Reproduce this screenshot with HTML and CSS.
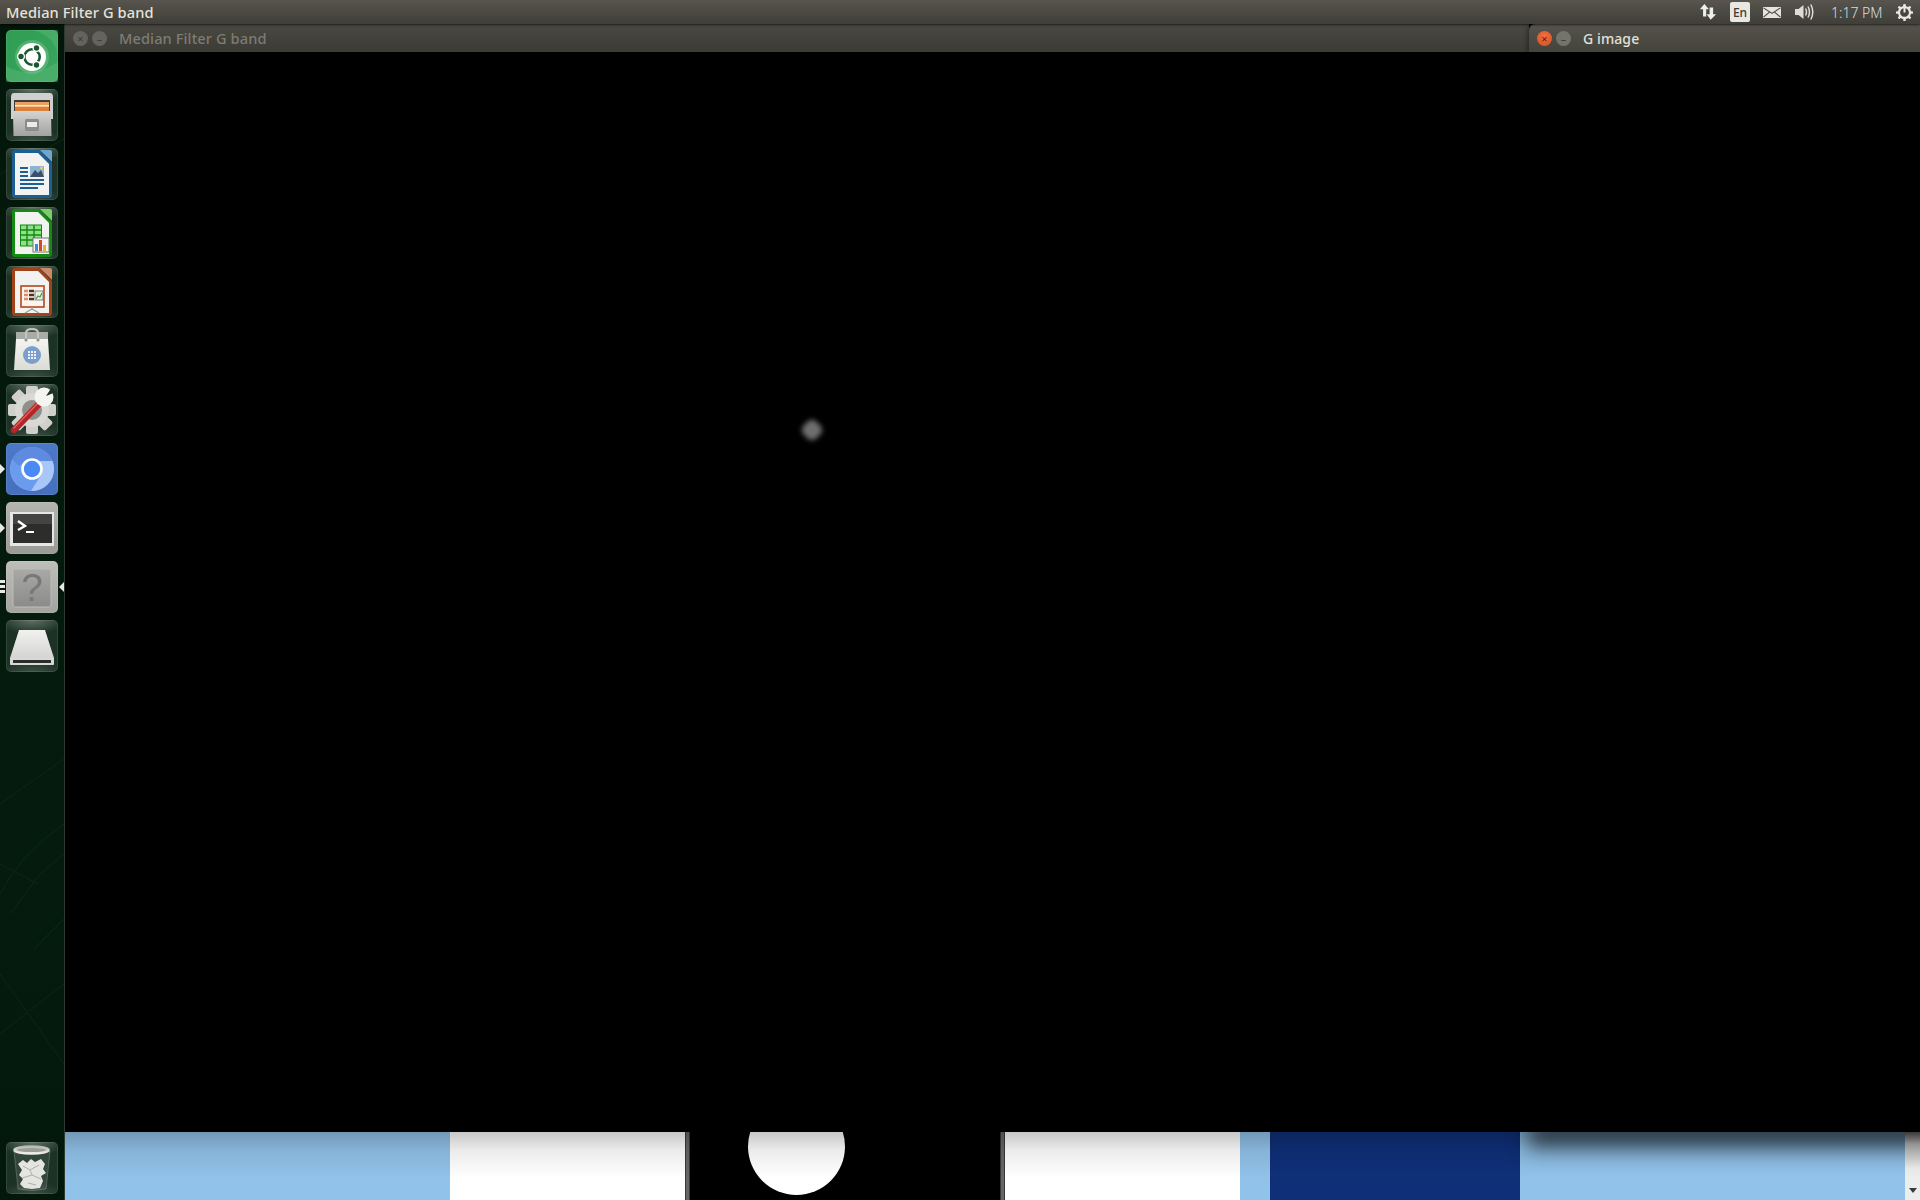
FILE: index.html
```html
<!DOCTYPE html>
<html lang="en">
<head>
<meta charset="utf-8">
<title>Median Filter G band</title>
<link rel="stylesheet" href="styles.css">
</head>
<body>
<div class="desktop">
  <header class="panel">
    <div class="panel-title">Median Filter G band</div>
    <div class="indicators">
      <svg class="ind-net" width="18" height="18" viewBox="0 0 20 20"><path d="M6 1 L11 7 H8 V15 H4.5 V7 H1 Z M13 18.5 L19 12.5 H15.7 V5 H11.8 V12.5 H8.5 Z" fill="#eeeeea"/></svg>
      <div class="ind-lang">En</div>
      <svg class="ind-mail" width="18" height="11" viewBox="0 0 18 13" preserveAspectRatio="none"><rect width="18" height="13" fill="#e4e3dd"/><path d="M0.5 1 L9 7.5 L17.5 1 M0.5 12 L6.5 6 M17.5 12 L11.5 6" fill="none" stroke="#4a4943" stroke-width="1.1"/></svg>
      <svg class="ind-vol" width="20" height="18" viewBox="0 0 20 18"><path d="M0 6 H3.5 L8.5 2 V16 L3.5 12 H0 Z" fill="#dddcd6"/><path d="M10.5 5.5 Q12.5 9 10.5 12.5 M13 3.5 Q16 9 13 14.5 M15.8 1.5 Q19.8 9 15.8 16.5" fill="none" stroke="#dddcd6" stroke-width="1.5"/></svg>
      <div class="ind-clock">1:17 PM</div>
      <svg class="ind-power" width="17" height="17" viewBox="0 0 20 20"><g fill="#e8e7e1"><rect x="8.5" y="0" width="3" height="20" rx="1"/><rect x="0" y="8.5" width="20" height="3" rx="1"/><rect x="8.5" y="0" width="3" height="20" rx="1" transform="rotate(45 10 10)"/><rect x="8.5" y="0" width="3" height="20" rx="1" transform="rotate(-45 10 10)"/></g><circle cx="10" cy="10" r="6.4" fill="none" stroke="#e8e7e1" stroke-width="2.6"/><circle cx="10" cy="10" r="5.1" fill="#45443e"/><rect x="8.8" y="1" width="2.4" height="9" fill="#e8e7e1"/></svg>
    </div>
  </header>

  <div class="main">
    <nav class="launcher">
      <svg class="wallpaper" width="64" height="1176" viewBox="0 0 64 1176" fill="none" stroke="#0a2a14" stroke-width="1">
        <path d="M0 150 L64 115 M0 780 L64 735 M0 870 Q20 830 64 800 M0 950 L64 1040 M34 925 L64 895 M0 1010 L64 960 M10 890 L40 850 L64 830 M0 840 L38 860"/>
      </svg>
      <div class="launcher-top">
        <div class="tile tile-dash">
          <svg width="52" height="52" viewBox="0 0 52 52">
            <path d="M0 36 Q24 50 52 32 V52 H0 Z M28 0 Q52 8 52 30 V0 Z" fill="#62bb7e" opacity=".4"/>
            <circle cx="26" cy="27" r="17" fill="#8fd0a4" opacity=".35"/>
            <circle cx="26" cy="27" r="14" fill="#fff"/>
            <circle cx="26" cy="27" r="7.7" fill="none" stroke="#17582f" stroke-width="2.6"/>
            <circle cx="30.5" cy="18" r="4" fill="#fff"/><circle cx="30.5" cy="35" r="4" fill="#fff"/><circle cx="15" cy="26.5" r="4" fill="#fff"/>
            <circle cx="30.5" cy="18" r="2.7" fill="#17582f"/><circle cx="30.5" cy="35" r="2.7" fill="#17582f"/><circle cx="15" cy="26.5" r="2.7" fill="#17582f"/>
          </svg>
        </div>
        <div class="tile">
          <svg width="52" height="52" viewBox="0 0 52 52">
            <defs><linearGradient id="drawer" x1="0" y1="0" x2="0" y2="1"><stop offset="0" stop-color="#d4d4d2"/><stop offset="1" stop-color="#a2a2a0"/></linearGradient></defs>
            <path d="M5 8 Q5 4 8 4 H44 Q47 4 47 8 V30 H5 Z" fill="#cfcfcd"/>
            <rect x="8" y="11" width="36" height="12" fill="#3d3d3b"/>
            <rect x="9" y="13" width="34" height="10" fill="#e8a05c"/>
            <rect x="9" y="16" width="34" height="1.5" fill="#fbe6c6"/>
            <rect x="9" y="18" width="34" height="5" fill="#dc7f3c"/>
            <path d="M7 22 H45 L45.5 47 H7.5 Z" fill="url(#drawer)"/>
            <rect x="19" y="30" width="14" height="12" rx="1.5" fill="#8c8c8a"/>
            <rect x="21" y="33" width="10" height="5" fill="#ececea"/>
          </svg>
        </div>
        <div class="tile">
          <svg width="52" height="52" viewBox="0 0 52 52">
            <path d="M6 5 Q6 2 9 2 H33 L46 15 V47 Q46 50 43 50 H9 Q6 50 6 47 Z" fill="#1d5f92"/>
            <path d="M34 2 H44 Q46 2 46 4 V14 Z" fill="#6fa6cf"/>
            <path d="M9 5 H32 L43 16 V47 H9 Z" fill="#f2f2f0"/>
            <path d="M14 20 H22 M14 24 H22 M14 28 H22 M14 32 H38 M14 36 H38 M14 40 H32" stroke="#1d5f92" stroke-width="2"/>
            <rect x="24" y="18" width="14" height="11" fill="#8db3d3"/>
            <path d="M24 29 L29 22 L32 25 L35 22 L38 29 Z" fill="#39506a"/>
            <circle cx="35.5" cy="20" r="1.5" fill="#e8cf5b"/>
          </svg>
        </div>
        <div class="tile">
          <svg width="52" height="52" viewBox="0 0 52 52">
            <path d="M6 5 Q6 2 9 2 H33 L46 15 V47 Q46 50 43 50 H9 Q6 50 6 47 Z" fill="#138a10"/>
            <path d="M34 2 H44 Q46 2 46 4 V14 Z" fill="#77cf6a"/>
            <path d="M9 5 H32 L43 16 V47 H9 Z" fill="#f2f2f0"/>
            <rect x="14.5" y="18" width="21" height="21" fill="#8fe08a" stroke="#138a10"/>
            <path d="M14 23 H36 M14 28 H36 M14 33 H36 M21 18 V39 M28 18 V39" stroke="#138a10" stroke-width="1.4"/>
            <rect x="27" y="31" width="16" height="14" fill="#f4f4f2" stroke="#777"/>
            <rect x="29" y="37" width="3" height="7" fill="#3f8fd0"/><rect x="33" y="33" width="3" height="11" fill="#d8452c"/><rect x="37" y="38" width="3" height="6" fill="#eeb12c"/>
          </svg>
        </div>
        <div class="tile">
          <svg width="52" height="52" viewBox="0 0 52 52">
            <path d="M6 5 Q6 2 9 2 H33 L46 15 V47 Q46 50 43 50 H9 Q6 50 6 47 Z" fill="#a2421a"/>
            <path d="M34 2 H44 Q46 2 46 4 V14 Z" fill="#cd8a68"/>
            <path d="M9 5 H32 L43 16 V47 H9 Z" fill="#f2f2f0"/>
            <rect x="15" y="20" width="23" height="21" fill="#fbf4ef" stroke="#b5481d" stroke-width="1.6"/>
            <path d="M18 25 H22 M18 29 H22 M18 33 H22" stroke="#e08b5c" stroke-width="2.4"/>
            <path d="M23 25 H28 M23 29 H28 M23 33 H28" stroke="#55301e" stroke-width="2.4"/>
            <rect x="29" y="25" width="8" height="9" fill="#e8efe4" stroke="#666" stroke-width=".8"/>
            <path d="M30 33 L32 30 L34 31 L36 27" fill="none" stroke="#3f9c3a" stroke-width="1.2"/>
            <path d="M26 41 V44 M26 43 L19 47 M26 43 L33 47" stroke="#999" stroke-width="1.2"/>
          </svg>
        </div>
        <div class="tile">
          <svg width="52" height="52" viewBox="0 0 52 52">
            <defs><linearGradient id="bag" x1="0" y1="0" x2="0" y2="1"><stop offset="0" stop-color="#f4f4f0"/><stop offset="1" stop-color="#dcdcd6"/></linearGradient></defs>
            <path d="M10 14 L8 45 H44 L42 14 Z" fill="url(#bag)"/>
            <path d="M10 14 L10 7 H42 L42 14 Z" fill="#a7aca6"/>
            <path d="M20 15 V8 Q20 4 26 4 Q32 4 32 8 V15" fill="none" stroke="#c3c6c0" stroke-width="2"/>
            <circle cx="20" cy="15" r="1.5" fill="#88908a"/><circle cx="32" cy="15" r="1.5" fill="#88908a"/>
            <circle cx="26" cy="30" r="9" fill="#7c9ecd"/>
            <g fill="#eef2f8"><rect x="22" y="26" width="2" height="2"/><rect x="25" y="26" width="2" height="2"/><rect x="28" y="26" width="2" height="2"/><rect x="22" y="29" width="2" height="2"/><rect x="25" y="29" width="2" height="2"/><rect x="28" y="29" width="2" height="2"/><rect x="22" y="32" width="2" height="2"/><rect x="25" y="32" width="2" height="2"/><rect x="28" y="32" width="2" height="2"/></g>
          </svg>
        </div>
        <div class="tile">
          <svg width="52" height="52" viewBox="0 0 52 52">
            <g fill="#cfcfcb"><rect x="20" y="2" width="12" height="48" rx="2"/><rect x="2" y="20" width="48" height="12" rx="2"/><rect x="20" y="2" width="12" height="48" rx="2" transform="rotate(45 26 26)"/><rect x="20" y="2" width="12" height="48" rx="2" transform="rotate(-45 26 26)"/></g>
            <circle cx="26" cy="26" r="17" fill="#d8d8d4"/>
            <circle cx="26" cy="26" r="10" fill="#8f8f8b"/>
            <path d="M8 46 L34 19" stroke="#b42626" stroke-width="6.5" stroke-linecap="round"/>
            <path d="M8 44 L32 19" stroke="#e0605a" stroke-width="1.4" stroke-linecap="round"/>
            <circle cx="38" cy="13" r="9.5" fill="#f4f4f0"/>
            <path d="M40 12 L46 3 L50 8 Z" fill="#1c3225"/>
          </svg>
        </div>
        <div class="tile tile-chrome has-pip">
          <svg width="52" height="52" viewBox="0 0 52 52">
            <circle cx="26" cy="26" r="22" fill="#7aa5ec"/>
            <path d="M26 4 A22 22 0 0 1 46.5 18 H26 Q16 18 11 26 L6 16 Q14 4 26 4 Z" fill="#5e8be0"/>
            <path d="M6 16 Q2 30 10 40 Q16 46 25 48 L33 36 Q20 38 17 27 Z" fill="#6a9bee"/>
            <path d="M46.5 18 A22 22 0 0 1 25 48 L35 32 Q38 24 33 18 Z" fill="#a8c6f8"/>
            <circle cx="26" cy="26" r="9.5" fill="#4a8af4" stroke="#fff" stroke-width="2.6"/>
          </svg>
          <i class="pip"></i>
        </div>
        <div class="tile tile-term has-pip">
          <svg width="52" height="52" viewBox="0 0 52 52">
            <rect x="4" y="10" width="44" height="34" fill="#e6e6e4"/>
            <rect x="7" y="12" width="39" height="29" fill="#2d2d2b"/>
            <rect x="7" y="12" width="39" height="10" fill="#444442"/>
            <path d="M12 19 L19 24 L12 28" fill="none" stroke="#fff" stroke-width="2.4"/>
            <rect x="20" y="29" width="8" height="2" fill="#fff"/>
          </svg>
          <i class="pip"></i>
        </div>
        <div class="tile tile-help has-lines">
          <svg width="52" height="52" viewBox="0 0 52 52">
            <defs><linearGradient id="helpbox" x1="0" y1="0" x2="0" y2="1"><stop offset="0" stop-color="#a9a9a7"/><stop offset="1" stop-color="#8b8b89"/></linearGradient></defs>
            <rect x="7" y="8" width="38" height="38" rx="2" fill="url(#helpbox)" stroke="#bcbcba"/>
            <text class="help-mark" x="26" y="40" text-anchor="middle">?</text>
          </svg>
          <i class="lines"><b></b><b></b><b></b></i>
          <i class="pip-right"></i>
        </div>
        <div class="tile">
          <svg width="52" height="52" viewBox="0 0 52 52">
            <defs><linearGradient id="drive" x1="0" y1="0" x2="0" y2="1"><stop offset="0" stop-color="#f1f1ef"/><stop offset="1" stop-color="#d4d4d2"/></linearGradient></defs>
            <path d="M13 10 H39 L48 38 H4 Z" fill="url(#drive)"/>
            <path d="M4 38 H48 V44 Q48 45 47 45 H5 Q4 45 4 44 Z" fill="#d8d8d6"/>
            <rect x="7" y="40" width="38" height="3" fill="#2c2c2a"/>
          </svg>
        </div>
      </div>
      <div class="tile tile-trash">
        <svg width="52" height="52" viewBox="0 0 52 52">
          <defs><linearGradient id="rim" x1="0" y1="0" x2="0" y2="1"><stop offset="0" stop-color="#b8b8b4"/><stop offset="1" stop-color="#efefeb"/></linearGradient></defs>
          <path d="M8 9 L12 47 Q26 50 40 47 L44 9 Z" fill="#ffffff" fill-opacity=".1" stroke="#aab" stroke-opacity=".35"/>
          <g fill="#e4e4e0">
            <path d="M12 22 L17 18 L21 21 L25 17 L29 20 L35 17 L39 22 L37 27 L40 31 L35 34 L37 39 L34 46 L26 47 L18 46 L14 42 L17 37 L13 33 L16 28 Z"/>
          </g>
          <path d="M17 24 L24 28 L33 23 M16 36 L26 33 L35 37 M24 28 L26 33 M22 41 L30 43" fill="none" stroke="#a8a8a4" stroke-width=".9"/>
          <ellipse cx="25.5" cy="8" rx="17" ry="3.4" fill="#9a9e98" stroke="url(#rim)" stroke-width="2.6"/>
        </svg>
      </div>
    </nav>

    <div class="workspace">
      <div class="titlebars">
        <div class="titlebar titlebar-back">
          <span class="wbtn wbtn-dim">×</span>
          <span class="wbtn wbtn-dim">–</span>
          <span class="wtitle wtitle-dim">Median Filter G band</span>
        </div>
        <div class="titlebar titlebar-front">
          <span class="wbtn wbtn-close">×</span>
          <span class="wbtn wbtn-min">–</span>
          <span class="wtitle">G image</span>
        </div>
      </div>
      <div class="canvas">
        <div class="spot"></div>
      </div>
      <div class="strip">
        <div class="seg seg-sky seg-a"></div>
        <div class="seg seg-white seg-b"></div>
        <div class="seg seg-bar"></div>
        <div class="seg seg-black"><div class="disc"></div></div>
        <div class="seg seg-bar"></div>
        <div class="seg seg-white seg-b"></div>
        <div class="seg seg-sky seg-c"></div>
        <div class="seg seg-navy"></div>
        <div class="seg seg-sky seg-d"><div class="cast"></div></div>
        <div class="seg seg-scroll"><i class="scroll-arrow"></i></div>
        <div class="strip-shade"></div>
      </div>
    </div>
  </div>
</div>
</body>
</html>
```
FILE: styles.css
```css
* { box-sizing: border-box; }
html, body { margin: 0; padding: 0; background: #000; }
body { font-family: "Noto Sans", "Open Sans", sans-serif; }

.desktop { width: 1920px; height: 1200px; display: flex; flex-direction: column; overflow: hidden; }

.panel {
  height: 24px; flex: none; display: flex; justify-content: space-between; align-items: center;
  background: linear-gradient(#57554d, #3f3e38);
  box-shadow: 0 1px 2px rgba(0,0,0,.6); position: relative; z-index: 3;
}
.panel-title { margin-left: 6px; font-size: 14.6px; font-weight: 500; color: #e6e3da; white-space: nowrap; letter-spacing: .1px; }
.indicators { display: flex; align-items: center; }
.ind-net { margin-right: 13px; }
.ind-lang {
  width: 20px; height: 20px; border-radius: 2px; background: #e9e7e1; color: #3c3b36;
  font-size: 12px; font-weight: 500; display: flex; align-items: center; justify-content: center;
  margin-right: 13px;
}
.ind-mail { margin-right: 14px; }
.ind-vol { margin-right: 16px; }
.ind-clock { width: 51px; flex: none; font-size: 14px; font-weight: 300; color: #d8dce0; margin-right: 14px; white-space: nowrap; }
.ind-power { margin-right: 7px; }

.main { flex: 1; display: flex; min-height: 0; }

.launcher {
  width: 65px; flex: none; position: relative; padding: 6px;
  display: flex; flex-direction: column; justify-content: space-between;
  background: linear-gradient(#03160a, #041c0d 70%, #03180b); border-right: 1px solid #2c3a2f;
}
.wallpaper { position: absolute; left: 0; top: 0; }
.launcher-top { display: flex; flex-direction: column; gap: 7px; position: relative; }
.tile {
  width: 52px; height: 52px; border-radius: 5px; position: relative; flex: none;
  background:
    radial-gradient(ellipse 34px 14px at 50% 0, rgba(255,255,255,.3), rgba(255,255,255,0)),
    radial-gradient(ellipse 34px 12px at 50% 100%, rgba(255,255,255,.14), rgba(255,255,255,0)),
    #1c3225;
  box-shadow: inset 0 0 0 1px rgba(255,255,255,.1);
}
.tile svg { display: block; }
.tile-dash { background: linear-gradient(135deg, #2f9c52, #3aa75f); }
.tile-chrome { background: linear-gradient(#4c78c8, #4670bd); }
.tile-term { background: linear-gradient(#b4b4b0, #9a9a96); }
.tile-help { background: linear-gradient(#bdbdb9, #a3a39f); }
.tile-trash { position: relative; }
.help-mark { font-family: "Liberation Sans", sans-serif; font-size: 38px; font-weight: 400; fill: #787876; }

.pip {
  position: absolute; left: -6px; top: 21px; width: 0; height: 0;
  border-left: 5px solid #e8e8e8; border-top: 5px solid transparent; border-bottom: 5px solid transparent;
}
.pip-right {
  position: absolute; right: -6px; top: 21px; width: 0; height: 0;
  border-right: 5px solid #e8e8e8; border-top: 5px solid transparent; border-bottom: 5px solid transparent;
}
.lines { position: absolute; left: -6px; top: 19px; display: flex; flex-direction: column; gap: 2px; }
.lines b { display: block; width: 5px; height: 3px; background: #e8e8e8; }

.workspace { flex: 1; display: flex; flex-direction: column; min-width: 0; }
.titlebars { height: 28px; flex: none; display: flex; }
.titlebar { height: 28px; display: flex; align-items: center; }
.titlebar-back { flex: 1; padding-left: 8px; background: linear-gradient(#4a4941, #3c3b35); }
.titlebar-front {
  width: 391px; flex: none; padding-left: 8px; border-radius: 6px 0 0 0;
  background: linear-gradient(#55534b, #44433c); box-shadow: -2px 0 4px rgba(0,0,0,.35);
}
.wbtn {
  width: 15px; height: 15px; border-radius: 50%; margin-right: 4px; flex: none;
  display: flex; align-items: center; justify-content: center; font-size: 11px; line-height: 1;
}
.wbtn-dim { background: #64635c; color: #3e3d38; }
.wbtn-close { background: radial-gradient(circle at 50% 35%, #f2703f, #d94d22); color: #5a2410; }
.wbtn-min { background: #75746c; color: #3e3d38; }
.wtitle { margin-left: 8px; font-size: 14px; font-weight: 500; color: #e2e0d8; white-space: nowrap; letter-spacing: .1px; }
.wtitle-dim { color: #7d7c74; font-size: 14.6px; }

.canvas { flex: 1; background: #000; position: relative; min-height: 0; }
.spot {
  position: absolute; left: 738px; top: 369px; width: 18px; height: 18px; border-radius: 35%;
  background: #6e6e6e; filter: blur(2.5px); transform: rotate(45deg);
}

.strip { height: 68px; flex: none; display: flex; position: relative; overflow: hidden; }
.seg { height: 100%; flex: none; position: relative; }
.seg-sky { background: #91c2e9; }
.seg-a { width: 385px; }
.seg-b { width: 235px; }
.seg-c { width: 30px; }
.seg-d { width: 385px; }
.seg-white { background: #fff; }
.seg-bar { width: 5px; background: linear-gradient(90deg, #222, #666 30%, #666 70%, #222); }
.seg-black { width: 310px; background: #000; }
.seg-navy { width: 250px; background: #0f2f78; }
.seg-scroll { flex: 1; background: linear-gradient(#4a4a4a, #a8a8a8 12px, #eceeee 36px); }
.scroll-arrow {
  position: absolute; left: 4px; bottom: 7px; width: 0; height: 0;
  border-top: 5px solid #3a3a3a; border-left: 4px solid transparent; border-right: 4px solid transparent;
}
.disc {
  position: absolute; left: 58px; top: -34px; width: 97px; height: 97px; border-radius: 50%; background: #fff;
}
.strip-shade {
  position: absolute; inset: 0 0 auto 0; height: 46px; pointer-events: none;
  background: linear-gradient(rgba(0,0,0,.22), rgba(0,0,0,.08) 40%, rgba(0,0,0,0));
}
.cast {
  position: absolute; left: 8px; right: -20px; top: -14px; height: 30px;
  background: rgba(0,0,0,.62); filter: blur(10px);
}
```
